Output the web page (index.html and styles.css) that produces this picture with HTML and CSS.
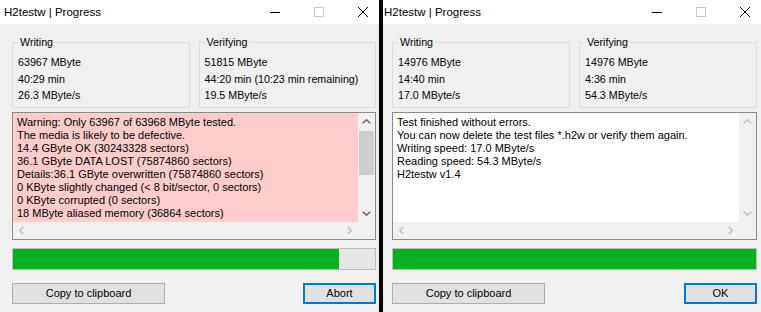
FILE: index.html
```html
<!DOCTYPE html>
<html lang="en">
<head>
<meta charset="UTF-8">
<title>H2testw | Progress</title>
<link rel="stylesheet" href="styles.css">
</head>
<body>
<div class="screen">

<section class="window win-left">
<div class="titlebar">
<span class="title">H2testw | Progress</span>
<div class="caption">
<span class="cap-min"></span>
<span class="cap-max"></span>
<svg class="cap-close" viewBox="0 0 10 10"><path d="M0 0L10 10M10 0L0 10"/></svg>
</div>
</div>
<div class="content">
<div class="groups">
<fieldset class="group"><legend>Writing</legend>
<div>63967 MByte</div><div>40:29 min</div><div>26.3 MByte/s</div>
</fieldset>
<fieldset class="group"><legend>Verifying</legend>
<div>51815 MByte</div><div>44:20 min (10:23 min remaining)</div><div>19.5 MByte/s</div>
</fieldset>
</div>
<div class="log warn">
<div class="log-text">
<div>Warning: Only 63967 of 63968 MByte tested.</div>
<div>The media is likely to be defective.</div>
<div>14.4 GByte OK (30243328 sectors)</div>
<div>36.1 GByte DATA LOST (75874860 sectors)</div>
<div>Details:36.1 GByte overwritten (75874860 sectors)</div>
<div>0 KByte slightly changed (&lt; 8 bit/sector, 0 sectors)</div>
<div>0 KByte corrupted (0 sectors)</div>
<div>18 MByte aliased memory (36864 sectors)</div>
</div>
<div class="vscroll">
<span class="arrow"><svg viewBox="0 0 9 5"><polyline points="0.7,4.3 4.5,0.8 8.3,4.3"/></svg></span>
<span class="thumb"></span>
<span class="arrow down"><svg viewBox="0 0 9 5"><polyline points="0.7,0.7 4.5,4.2 8.3,0.7"/></svg></span>
</div>
<div class="hscroll">
<span class="arrow off"><svg viewBox="0 0 5 9"><polyline points="4.3,0.7 0.8,4.5 4.3,8.3"/></svg></span>
<span class="arrow off"><svg viewBox="0 0 5 9"><polyline points="0.7,0.7 4.2,4.5 0.7,8.3"/></svg></span>
</div>
<div class="corner"></div>
</div>
<div class="progress"><div class="progress-fill" style="width:90%"></div></div>
<div class="buttons">
<button class="btn wide">Copy to clipboard</button>
<button class="btn default">Abort</button>
</div>
</div>
</section>

<section class="window win-right">
<div class="titlebar">
<span class="title">H2testw | Progress</span>
<div class="caption">
<span class="cap-min"></span>
<span class="cap-max"></span>
<svg class="cap-close" viewBox="0 0 10 10"><path d="M0 0L10 10M10 0L0 10"/></svg>
</div>
</div>
<div class="content">
<div class="groups">
<fieldset class="group"><legend>Writing</legend>
<div>14976 MByte</div><div>14:40 min</div><div>17.0 MByte/s</div>
</fieldset>
<fieldset class="group"><legend>Verifying</legend>
<div>14976 MByte</div><div>4:36 min</div><div>54.3 MByte/s</div>
</fieldset>
</div>
<div class="log">
<div class="log-text">
<div>Test finished without errors.</div>
<div>You can now delete the test files *.h2w or verify them again.</div>
<div>Writing speed: 17.0 MByte/s</div>
<div>Reading speed: 54.3 MByte/s</div>
<div>H2testw v1.4</div>
</div>
<div class="vscroll">
<span class="arrow off"><svg viewBox="0 0 9 5"><polyline points="0.7,4.3 4.5,0.8 8.3,4.3"/></svg></span>
<span class="arrow off down"><svg viewBox="0 0 9 5"><polyline points="0.7,0.7 4.5,4.2 8.3,0.7"/></svg></span>
</div>
<div class="hscroll">
<span class="arrow off"><svg viewBox="0 0 5 9"><polyline points="4.3,0.7 0.8,4.5 4.3,8.3"/></svg></span>
<span class="arrow off"><svg viewBox="0 0 5 9"><polyline points="0.7,0.7 4.2,4.5 0.7,8.3"/></svg></span>
</div>
<div class="corner"></div>
</div>
<div class="progress"><div class="progress-fill" style="width:100%"></div></div>
<div class="buttons">
<button class="btn wide">Copy to clipboard</button>
<button class="btn default">OK</button>
</div>
</div>
</section>

</div>
</body>
</html>
```

FILE: styles.css
```css
*{margin:0;padding:0;box-sizing:border-box;}
body{background:#000;font-family:"Liberation Sans",Arial,sans-serif;font-size:11px;color:#000;width:761px;height:312px;overflow:hidden;}
.screen{display:flex;gap:4px;height:312px;}
.window{background:#f0f0f0;height:312px;display:flex;flex-direction:column;}
.win-left{width:379px;}
.win-right{flex:1;}

/* title bar */
.titlebar{height:24px;background:#fff;display:flex;align-items:center;line-height:24px;padding-right:11px;}
.win-left .titlebar{padding-left:4px;}
.win-right .titlebar{padding-left:1px;}
.title{font-size:11.5px;}
.caption{margin-left:auto;display:flex;align-items:center;gap:34px;}
.cap-min{display:block;width:10px;height:1px;background:#000;}
.cap-max{display:block;width:10px;height:10px;border:1px solid #c8c8c8;}
.cap-close{display:block;width:10px;height:10px;stroke:#000;stroke-width:1;fill:none;}

.content{display:flex;flex-direction:column;padding-top:11px;}
.win-left .content{padding-left:12px;padding-right:3px;}
.win-right .content{padding-left:9px;padding-right:4px;}

/* group boxes */
.groups{display:grid;grid-template-columns:1fr 1fr;gap:9px;}
.group{border:1px solid #dcdcdc;padding:5px 5px 3px;min-width:0;font-size:10.7px;line-height:16.5px;white-space:nowrap;}
.group legend{padding:0 2px;line-height:14px;}

/* log edit box */
.log{margin-top:4px;height:128px;border:1px solid #8a8a8a;display:grid;grid-template-columns:1fr 17px;grid-template-rows:1fr 17px;background:#fff;}
.log-text{padding:3px 4px;line-height:13px;white-space:nowrap;overflow:hidden;}
.warn .log-text{background:#ffcccc;}
.vscroll{background:#f0f0f0;display:flex;flex-direction:column;}
.hscroll{background:#f0f0f0;display:flex;justify-content:space-between;}
.corner{background:#f0f0f0;}
.arrow{width:17px;height:17px;display:flex;align-items:center;justify-content:center;}
.arrow svg{width:9px;height:9px;fill:none;stroke:#606060;stroke-width:1.5;}
.vscroll .arrow svg{height:5px;}
.hscroll .arrow svg{width:5px;}
.arrow.off svg{stroke:#c0c0c0;}
.vscroll .down{margin-top:auto;}
.thumb{display:block;height:44px;margin:1px 1px 0;background:#cdcdcd;}

/* progress bar */
.progress{margin-top:8px;height:22px;border:1px solid #bcbcbc;background:#e6e6e6;}
.progress-fill{height:100%;background:#06b025;}

/* buttons */
.buttons{margin-top:13px;display:flex;justify-content:space-between;}
.btn{height:21px;font-family:"Liberation Sans",Arial,sans-serif;font-size:11px;color:#000;background:#e1e1e1;border:1px solid #adadad;}
.btn.wide{width:153px;}
.btn.default{width:73px;border:2px solid #0078d7;}
```
